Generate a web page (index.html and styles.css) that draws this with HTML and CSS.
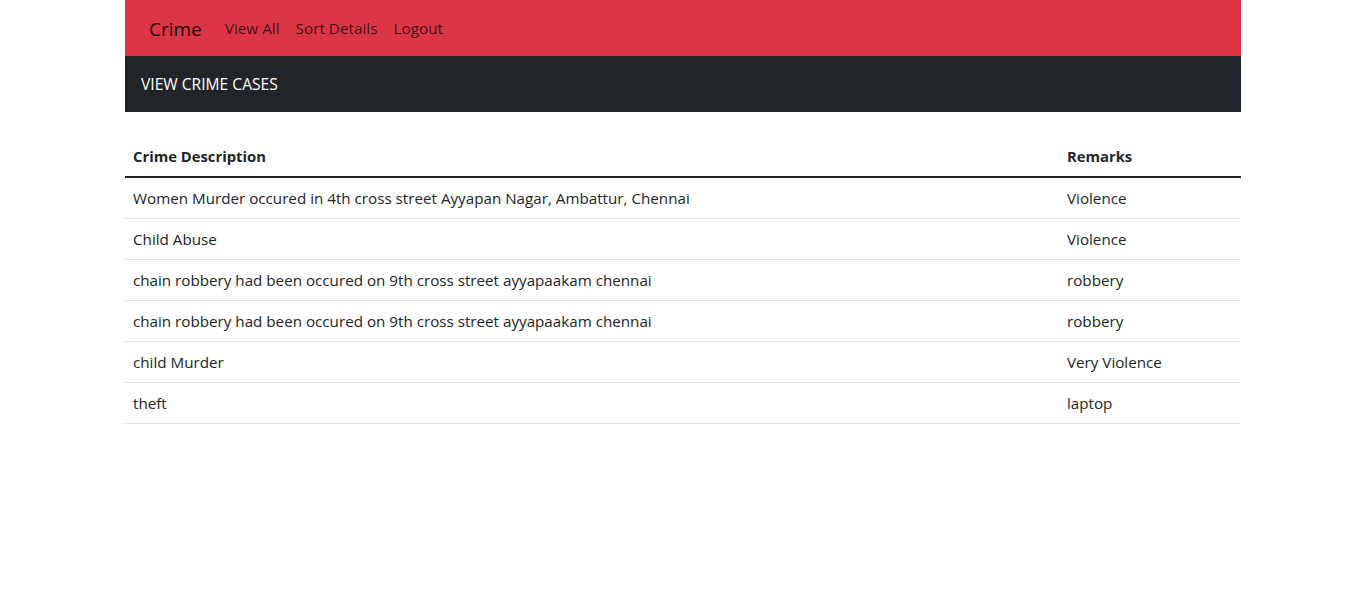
FILE: index.html
```html
<!DOCTYPE html>
<html lang="en">
<head>
<meta charset="utf-8">
<title>Crime</title>
<link rel="stylesheet" href="styles.css">
</head>
<body>
<div class="container">
  <nav class="navbar">
    <a class="brand" href="#">Crime</a>
    <ul class="nav">
      <li><a class="nav-link" href="#">View All</a></li>
      <li><a class="nav-link" href="#">Sort Details</a></li>
      <li><a class="nav-link" href="#">Logout</a></li>
    </ul>
  </nav>
  <div class="titlebar">VIEW CRIME CASES</div>
  <table class="table">
    <thead>
      <tr><th>Crime Description</th><th class="col-remarks">Remarks</th></tr>
    </thead>
    <tbody>
      <tr><td>Women Murder occured in 4th cross street Ayyapan Nagar, Ambattur, Chennai</td><td>Violence</td></tr>
      <tr><td>Child Abuse</td><td>Violence</td></tr>
      <tr><td>chain robbery had been occured on 9th cross street ayyapaakam chennai</td><td>robbery</td></tr>
      <tr><td>chain robbery had been occured on 9th cross street ayyapaakam chennai</td><td>robbery</td></tr>
      <tr><td>child Murder</td><td>Very Violence</td></tr>
      <tr><td>theft</td><td>laptop</td></tr>
    </tbody>
  </table>
</div>
</body>
</html>
```
FILE: styles.css
```css
* { box-sizing: border-box; }
html, body { margin: 0; padding: 0; }
body {
  font-family: "Open Sans", "Noto Sans", sans-serif;
  font-size: 16px;
  line-height: 24px;
  color: #212529;
  background: #fff;
}
.container {
  width: 1116px;
  margin: 0 auto;
}
.navbar {
  background: #dc3545;
  height: 56px;
  display: flex;
  align-items: center;
  padding: 0 24px;
}
.brand {
  font-size: 19px;
  line-height: 30px;
  color: rgba(0, 0, 0, 0.9);
  text-decoration: none;
  margin-right: 15px;
  position: relative;
  top: 1px;
}
.nav {
  display: flex;
  list-style: none;
  margin: 0;
  padding: 0;
}
.nav-link {
  display: block;
  padding: 8px;
  font-size: 15.3px;
  color: rgba(0, 0, 0, 0.72);
  text-decoration: none;
}
.titlebar {
  background: #212529;
  color: #fff;
  height: 56px;
  display: flex;
  align-items: center;
  padding: 0 16px;
  font-size: 15.6px;
}
.table {
  width: 100%;
  border-collapse: collapse;
  margin-top: 24px;
  font-size: 15.2px;
}
.table th, .table td {
  text-align: left;
  padding: 8px;
  line-height: 24px;
  border-bottom: 1px solid #dee2e6;
}
.table th {
  font-weight: 700;
  font-size: 14.8px;
  border-bottom: 2px solid #212529;
}
.col-remarks { width: 182px; }
```
